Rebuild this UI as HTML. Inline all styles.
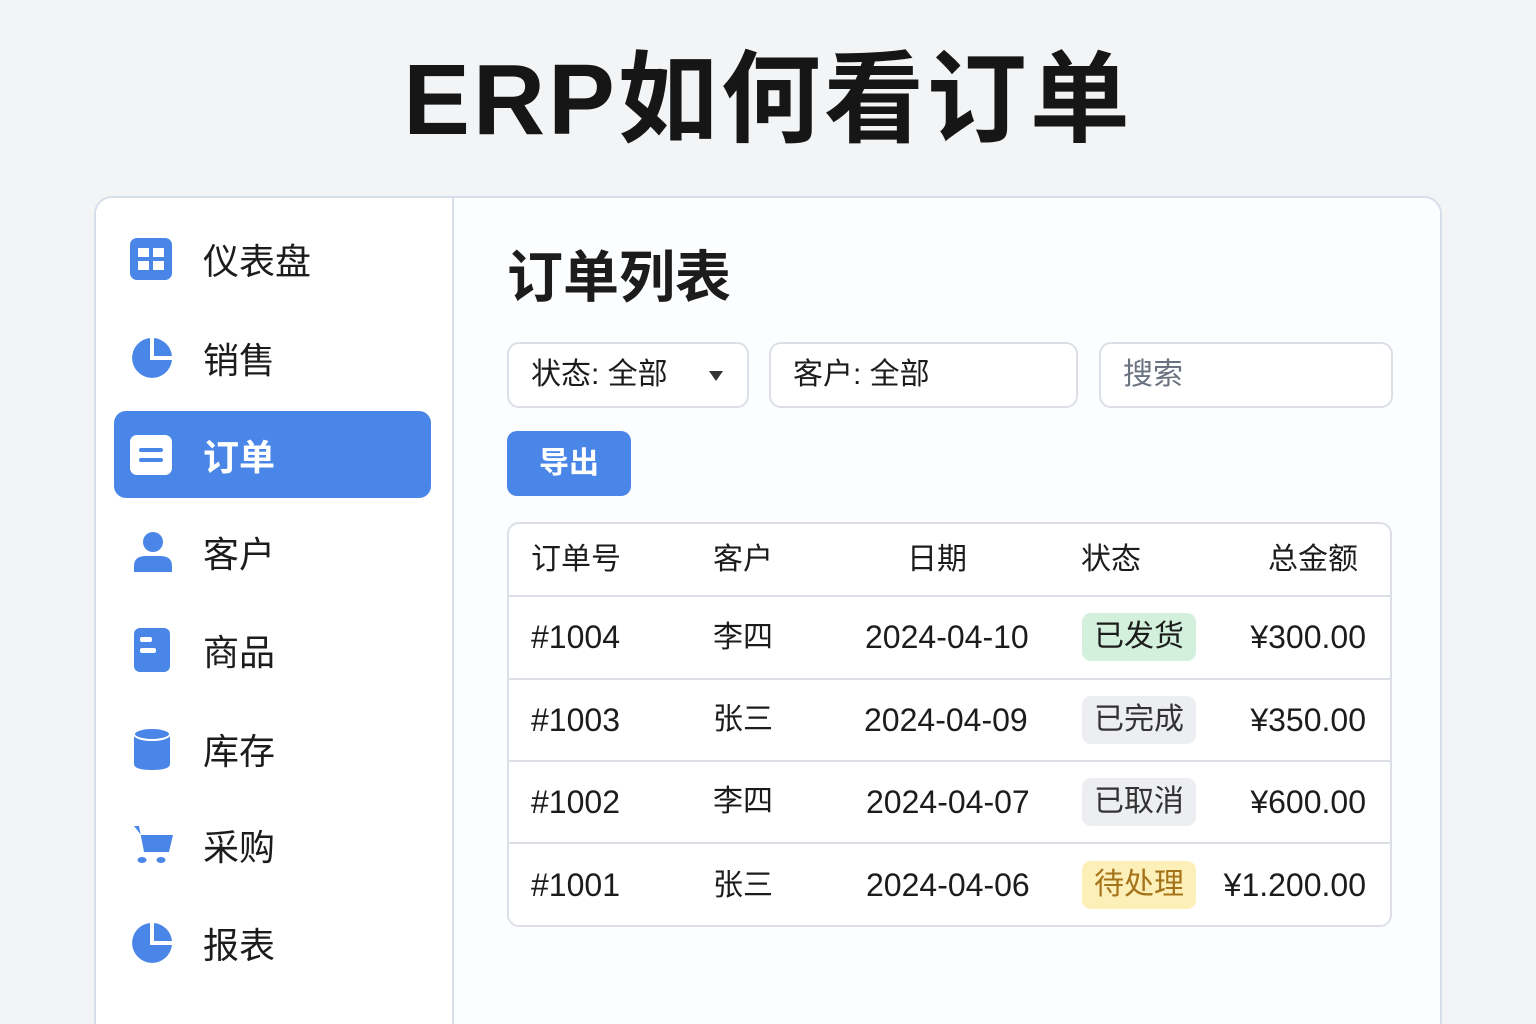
<!DOCTYPE html>
<html><head><meta charset="utf-8">
<style>
*{margin:0;padding:0;box-sizing:border-box}
html,body{width:1536px;height:1024px;overflow:hidden}
body{background:#f3f4f6;font-family:"Liberation Sans","Noto Sans CJK SC",sans-serif;color:#1c1c1c;position:relative}
.title{position:absolute;top:40px;left:0;width:1536px;text-align:center;font-size:100px;font-weight:bold;line-height:120px;color:#161616;letter-spacing:3px}
.card{position:absolute;left:94px;top:196px;width:1348px;height:828px;background:#fff;border:2px solid #d6deea;border-bottom:none;border-radius:18px 18px 0 0;overflow:hidden}
.side{position:absolute;left:0;top:0;width:358px;height:100%;border-right:2px solid #d6deea;background:#fff}
.item{position:absolute;left:18px;width:317px;height:87px;display:flex;align-items:center;font-size:36px}
.item svg{position:absolute;left:16px}
.item span{position:absolute;left:89px}
.active{background:#4a86e8;border-radius:12px;color:#fff;font-weight:bold}
.main{position:absolute;left:358px;top:0;right:0;bottom:0;background:#fcfdfe}
.abs{position:absolute}
h1{position:absolute;left:53px;top:44px;font-size:56px;line-height:72px;font-weight:bold}
.box{position:absolute;top:144px;height:66px;border:2px solid #dcdfe5;border-radius:12px;background:#fff;font-size:30px;line-height:62px;padding-left:22px}
.btn{position:absolute;left:53px;top:233px;width:124px;height:65px;background:#4a86e8;border-radius:10px;color:#fff;font-size:30px;line-height:65px;text-align:center;font-weight:bold}
.table{position:absolute;left:53px;top:324px;width:885px;height:405px;border:2px solid #dcdfe5;border-radius:12px;background:#fff;overflow:hidden}
.row{position:absolute;left:0;width:100%;border-bottom:2px solid #dcdfe5;font-size:30px}
.row div{position:absolute}
.n{font-size:32px}
.badge{border-radius:9px;height:48px;width:114px;text-align:center;line-height:48px}
</style></head><body>
<div class="title">ERP如何看订单</div>
<div class="card">
 <div class="side">
  <div class="item" style="top:17px"><svg width="42" height="42" viewBox="0 0 42 42"><rect x="0" y="0" width="42" height="42" rx="7" fill="#4a86e8"/><rect x="8" y="10" width="11" height="9" fill="#fff"/><rect x="23" y="10" width="11" height="9" fill="#fff"/><rect x="8" y="23" width="11" height="9" fill="#fff"/><rect x="23" y="23" width="11" height="9" fill="#fff"/></svg><span>仪表盘</span></div>
  <div class="item" style="top:116px"><svg width="44" height="44" viewBox="0 0 44 44"><path d="M20 2A20 20 0 1 0 42 24L20 24Z" fill="#4a86e8"/><path d="M24 2A20 20 0 0 1 42 20L24 20Z" fill="#4a86e8"/></svg><span>销售</span></div>
  <div class="item active" style="top:213px"><svg width="42" height="40" viewBox="0 0 42 40"><rect x="0" y="0" width="42" height="40" rx="7" fill="#fff"/><rect x="9" y="13" width="24" height="4" rx="2" fill="#4a86e8"/><rect x="9" y="23" width="24" height="4" rx="2" fill="#4a86e8"/></svg><span>订单</span></div>
  <div class="item" style="top:310px"><svg width="38" height="40" viewBox="0 0 38 40" style="left:20px"><circle cx="19" cy="10" r="10" fill="#4a86e8"/><path d="M0 40V34Q0 24 12 24H26Q38 24 38 34V40Z" fill="#4a86e8"/></svg><span>客户</span></div>
  <div class="item" style="top:408px"><svg width="36" height="44" viewBox="0 0 36 44" style="left:20px"><rect width="36" height="44" rx="6" fill="#4a86e8"/><rect x="6" y="9" width="12" height="5" rx="2" fill="#fff"/><rect x="6" y="20" width="16" height="5" rx="2" fill="#fff"/></svg><span>商品</span></div>
  <div class="item" style="top:507px"><svg width="36" height="42" viewBox="0 0 36 42" style="left:20px"><path d="M0 6V36Q0 42 18 42Q36 42 36 36V6Z" fill="#4a86e8"/><ellipse cx="18" cy="6" rx="18" ry="6" fill="#4a86e8" stroke="#fff" stroke-width="2"/></svg><span>库存</span></div>
  <div class="item" style="top:603px"><svg width="42" height="40" viewBox="0 0 42 40" style="left:18px"><path d="M2 1H7L12 27H37L41 10H9Z" fill="#4a86e8"/><ellipse cx="10" cy="35" rx="4.5" ry="3" fill="#4a86e8"/><ellipse cx="29" cy="35" rx="4.5" ry="3" fill="#4a86e8"/></svg><span>采购</span></div>
  <div class="item" style="top:701px"><svg width="44" height="44" viewBox="0 0 44 44"><path d="M20 2A20 20 0 1 0 42 24L20 24Z" fill="#4a86e8"/><path d="M24 2A20 20 0 0 1 42 20L24 20Z" fill="#4a86e8"/></svg><span>报表</span></div>
 </div>
 <div class="main">
  <h1>订单列表</h1>
  <div class="box" style="left:53px;width:242px">状态: 全部<svg class="abs" style="left:200px;top:27px" width="14" height="10" viewBox="0 0 14 10"><path d="M0 0H14L7 10Z" fill="#333"/></svg></div>
  <div class="box" style="left:315px;width:309px">客户: 全部</div>
  <div class="box" style="left:645px;width:294px;color:#6b7280">搜索</div>
  <div class="btn">导出</div>
  <div class="table">
   <div class="row" style="top:0;height:73px;line-height:71px">
    <div style="left:22px">订单号</div><div style="left:204px">客户</div><div style="left:398px">日期</div><div style="left:572px">状态</div><div style="right:32px">总金额</div>
   </div>
   <div class="row" style="top:73px;height:83px;line-height:81px">
    <div class="n" style="left:22px">#1004</div><div style="left:204px">李四</div><div class="n" style="left:356px">2024-04-10</div>
    <div class="badge" style="left:573px;top:16px;background:#d3f0dc">已发货</div><div class="n" style="right:24px">¥300.00</div>
   </div>
   <div class="row" style="top:156px;height:82px;line-height:80px">
    <div class="n" style="left:22px">#1003</div><div style="left:204px">张三</div><div class="n" style="left:355px">2024-04-09</div>
    <div class="badge" style="left:573px;top:16px;background:#eceef1;color:#333">已完成</div><div class="n" style="right:24px">¥350.00</div>
   </div>
   <div class="row" style="top:238px;height:82px;line-height:80px">
    <div class="n" style="left:22px">#1002</div><div style="left:204px">李四</div><div class="n" style="left:357px">2024-04-07</div>
    <div class="badge" style="left:573px;top:16px;background:#eceef1;color:#333">已取消</div><div class="n" style="right:24px">¥600.00</div>
   </div>
   <div class="row" style="top:320px;height:85px;line-height:83px;border-bottom:none">
    <div class="n" style="left:22px">#1001</div><div style="left:204px">张三</div><div class="n" style="left:357px">2024-04-06</div>
    <div class="badge" style="left:573px;top:17px;background:#fdefb8;color:#a5741a">待处理</div><div class="n" style="right:24px">¥1.200.00</div>
   </div>
  </div>
 </div>
</div>
</body></html>
